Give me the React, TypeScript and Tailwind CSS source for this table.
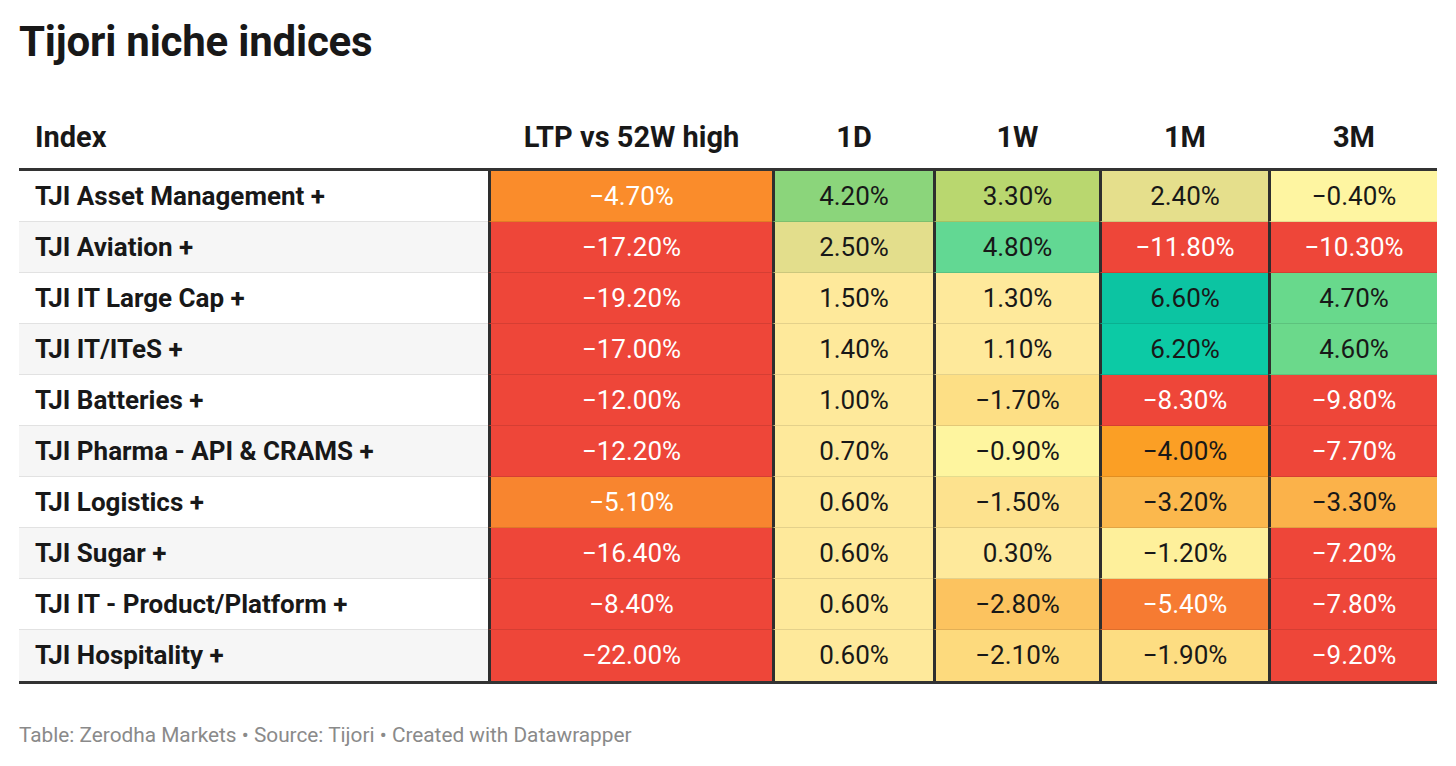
import React from 'react';

type Cell = { v: string; bg: string; light?: boolean };

const RED = '#ee4639';

const rows: { name: string; cells: Cell[] }[] = [
    {
        name: 'TJI Asset Management +',
        cells: [
            { v: '−4.70%', bg: '#fa8c2b', light: true },
            { v: '4.20%', bg: '#8bd57b' },
            { v: '3.30%', bg: '#b9d76f' },
            { v: '2.40%', bg: '#e5df8c' },
            { v: '−0.40%', bg: '#fef5a1' },
        ],
    },
    {
        name: 'TJI Aviation +',
        cells: [
            { v: '−17.20%', bg: RED, light: true },
            { v: '2.50%', bg: '#e3de8c' },
            { v: '4.80%', bg: '#62d893' },
            { v: '−11.80%', bg: RED, light: true },
            { v: '−10.30%', bg: RED, light: true },
        ],
    },
    {
        name: 'TJI IT Large Cap +',
        cells: [
            { v: '−19.20%', bg: RED, light: true },
            { v: '1.50%', bg: '#fee99b' },
            { v: '1.30%', bg: '#fee99b' },
            { v: '6.60%', bg: '#0cc4a2' },
            { v: '4.70%', bg: '#68d98c' },
        ],
    },
    {
        name: 'TJI IT/ITeS +',
        cells: [
            { v: '−17.00%', bg: RED, light: true },
            { v: '1.40%', bg: '#fee99b' },
            { v: '1.10%', bg: '#fee99b' },
            { v: '6.20%', bg: '#0ccaa5' },
            { v: '4.60%', bg: '#6bd98b' },
        ],
    },
    {
        name: 'TJI Batteries +',
        cells: [
            { v: '−12.00%', bg: RED, light: true },
            { v: '1.00%', bg: '#fee99b' },
            { v: '−1.70%', bg: '#fddf85' },
            { v: '−8.30%', bg: RED, light: true },
            { v: '−9.80%', bg: RED, light: true },
        ],
    },
    {
        name: 'TJI Pharma - API & CRAMS +',
        cells: [
            { v: '−12.20%', bg: RED, light: true },
            { v: '0.70%', bg: '#fee99b' },
            { v: '−0.90%', bg: '#fef59f' },
            { v: '−4.00%', bg: '#fb9f25' },
            { v: '−7.70%', bg: RED, light: true },
        ],
    },
    {
        name: 'TJI Logistics +',
        cells: [
            { v: '−5.10%', bg: '#f8852f', light: true },
            { v: '0.60%', bg: '#fee99b' },
            { v: '−1.50%', bg: '#fde28e' },
            { v: '−3.20%', bg: '#fbb84d' },
            { v: '−3.30%', bg: '#fbb24a' },
        ],
    },
    {
        name: 'TJI Sugar +',
        cells: [
            { v: '−16.40%', bg: RED, light: true },
            { v: '0.60%', bg: '#fee99b' },
            { v: '0.30%', bg: '#fee99b' },
            { v: '−1.20%', bg: '#fef09b' },
            { v: '−7.20%', bg: RED, light: true },
        ],
    },
    {
        name: 'TJI IT - Product/Platform +',
        cells: [
            { v: '−8.40%', bg: RED, light: true },
            { v: '0.60%', bg: '#fee99b' },
            { v: '−2.80%', bg: '#fcc35f' },
            { v: '−5.40%', bg: '#f67b32', light: true },
            { v: '−7.80%', bg: RED, light: true },
        ],
    },
    {
        name: 'TJI Hospitality +',
        cells: [
            { v: '−22.00%', bg: RED, light: true },
            { v: '0.60%', bg: '#fee99b' },
            { v: '−2.10%', bg: '#fdda7d' },
            { v: '−1.90%', bg: '#fddd82' },
            { v: '−9.20%', bg: RED, light: true },
        ],
    },
];

const headers = ['LTP vs 52W high', '1D', '1W', '1M', '3M'];

// fixed column widths measured off the chart
const cols = 'grid grid-cols-[469px_284px_161px_166px_169px_169px]';

const App = () => {
    return (
        <div className="min-h-[766px] w-[1456px] bg-white px-[19px] pt-[18px] text-[#181818]" style={{ fontFamily: 'Roboto, "Liberation Sans", sans-serif' }}>
            <h1 className="text-[42px] font-bold leading-[48px] tracking-[-0.2px]">Tijori niche indices</h1>

            <div className="mt-[50px] w-[1418px]">
                <div className={`${cols} h-[55px] items-center border-b-[3px] border-[#333] text-[29px] font-bold`}>
                    <div className="pl-4 pb-[14px]">Index</div>
                    {headers.map((h) => (
                        <div key={h} className="pb-[14px] pl-[3px] text-center">{h}</div>
                    ))}
                </div>

                <div className="border-b-[3px] border-[#333]">
                    {rows.map((row, i) => (
                        <div key={row.name} className={`${cols} h-[51px]`}>
                            <div className={`flex items-center pl-4 text-[26px] font-bold ${i % 2 === 1 ? 'bg-[#f6f6f6]' : 'bg-white'} ${i < rows.length - 1 ? 'border-b border-[#e2e2e2]' : ''}`}>
                                {row.name}
                            </div>
                            {row.cells.map((c, j) => (
                                <div
                                    key={j}
                                    className={`flex items-center justify-center border-l-[3px] border-l-[#2e2e2e] text-[26px] ${i < rows.length - 1 ? 'border-b border-b-black/10' : ''} ${c.light ? 'text-white' : 'text-[#181818]'}`}
                                    style={{ backgroundColor: c.bg }}
                                >
                                    {c.v}
                                </div>
                            ))}
                        </div>
                    ))}
                </div>
            </div>

            <p className="mt-[36px] text-[20.8px] text-[#8a8a8a]">Table: Zerodha Markets • Source: Tijori • Created with Datawrapper</p>
        </div>
    );
};

export default App;
